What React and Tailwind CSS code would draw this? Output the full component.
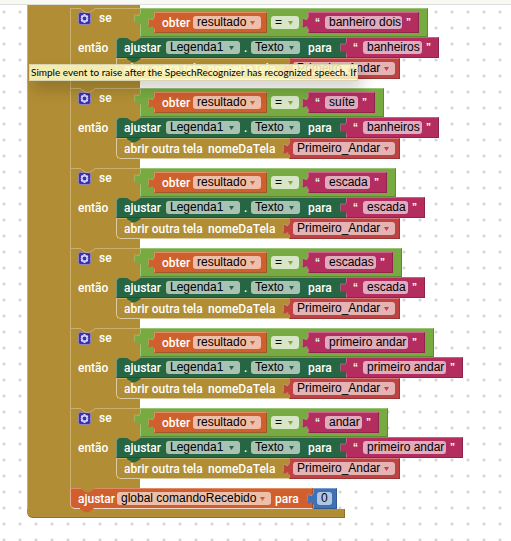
import React from "react";

const conditions = [
  { word: "banheiro dois", wordWidth: "w-[77px]", label: "banheiros", labelWidth: "w-[59px]" },
  { word: "suíte", wordWidth: "w-[33px]", label: "banheiros", labelWidth: "w-[59px]" },
  { word: "escada", wordWidth: "w-[45px]", label: "escada", labelWidth: "w-[45px]" },
  { word: "escadas", wordWidth: "w-[51px]", label: "escada", labelWidth: "w-[45px]" },
  { word: "primeiro andar", wordWidth: "w-[83px]", label: "primeiro andar", labelWidth: "w-[83px]" },
  { word: "andar", wordWidth: "w-[37px]", label: "primeiro andar", labelWidth: "w-[83px]" },
];

function Tab({ color, className = "-left-[7px] top-[4px]" }) {
  return (
    <svg className={`absolute ${className}`} width="7" height="12" viewBox="0 0 7 12" aria-hidden="true">
      <path d="M7 0.5H5.6C5.6 2.8 4.6 3 3 2.2C1.2 1.4 0.4 1 0.4 3.6V8.6C0.4 11 1.4 10.6 3 9.8C4.6 9 5.6 9 5.6 11.5H7Z" fill={color} />
      <path d="M5.6 0.5C5.6 2.8 4.6 3 3 2.2C1.2 1.4 0.4 1 0.4 3.6V8.6" fill="none" stroke="#fff" strokeOpacity="0.35" strokeWidth="0.7" />
    </svg>
  );
}

function Notch({ color, line }) {
  return (
    <svg className="absolute -top-px left-[10px]" width="14" height="5" viewBox="0 0 14 5" aria-hidden="true">
      <path d="M0 0V1L5 4.3H8.5L13.5 1V0Z" fill={color} />
      {line && <path d="M0 1.3L5 4.4H8.5L13.5 1.3" fill="none" stroke="#d0ba80" strokeWidth="0.8" />}
    </svg>
  );
}

function Dropdown({ name, value, width, arrow, tone = "bg-white/60" }) {
  return (
    <span className={`relative block h-[13px] shrink-0 rounded-[3px] ${tone} ${width}`}>
      <select aria-label={name} defaultValue={value} className="block h-[13px] w-full appearance-none bg-transparent pl-1 text-xs leading-[13px] text-black outline-none">
        <option>{value}</option>
      </select>
      <svg className="pointer-events-none absolute right-[6px] top-[5px]" width="5" height="4" viewBox="0 0 5 4" aria-hidden="true">
        <path d="M0 0H5L2.5 4Z" fill={arrow} />
      </svg>
    </span>
  );
}

function TextBlock({ value, width, name }) {
  return (
    <div className="relative flex h-[21px] shrink-0 items-center border border-t-[#c86089] border-l-[#c86089] border-r-[#8f244b] border-b-[#8f244b] bg-[#b32d5e] pl-[6px] pr-[5px]">
      <Tab color="#b32d5e" />
      <span className="w-[10px] text-[10px] font-bold leading-3 text-white">“</span>
      <input aria-label={name} defaultValue={value} className={`h-[13px] rounded-[3px] bg-white/60 pl-1 text-xs leading-[13px] text-black outline-none ${width}`} />
      <span className="w-[11px] pl-1 text-[10px] font-bold leading-3 text-white">”</span>
    </div>
  );
}

function Label({ children, className = "" }) {
  return <span className={`block shrink-0 whitespace-nowrap font-[Roboto] text-xs font-medium leading-3 text-white ${className}`}>{children}</span>;
}

function Mutator() {
  return (
    <button aria-label="Configurar bloco" className="block size-[13px] shrink-0">
      <svg width="13" height="13" viewBox="0 0 13 13" aria-hidden="true">
        <rect x="0.5" y="0.5" width="12" height="12" rx="2" fill="#3d30b5" stroke="#8f86b8" />
        <path d="M5.6 2.1h1.8l.3 1.3 1.3-.5 1.3 1.6-.8 1.1 1.1.9-1.1.9.8 1.1L9 10.1l-1.3-.5-.3 1.3H5.6l-.3-1.3-1.3.5-1.3-1.6.8-1.1-1.1-.9 1.1-.9-.8-1.1L4 2.9l1.3.5Z" fill="#dcd9ef" />
        <circle cx="6.5" cy="6.5" r="1.9" fill="#3d30b5" />
      </svg>
    </button>
  );
}

function IfBlock({ word, wordWidth, label, labelWidth }) {
  return (
    <section>
      <div className="flex h-[29px]">
        <div className="relative flex w-[70px] shrink-0 items-start border-l border-t border-[#c9b06e] bg-[#b18e35] pl-[7px] pt-[3px]">
          <Notch color="#b18e35" line />
          <Mutator />
          <Label className="ml-2">se</Label>
        </div>
        <div className="relative flex items-center border border-t-[#9cc376] border-l-[#9cc376] border-r-[#5f8934] border-b-[#5f8934] bg-[#77ab41] pl-[13px] pr-[8px]">
          <Tab color="#77ab41" />
          <div className="relative flex h-[21px] w-[113px] items-center border border-t-[#e08d68] border-l-[#e08d68] border-r-[#9c5a2a] border-b-[#9c5a2a] bg-[#d05f2d] pl-[7px]">
            <Tab color="#d05f2d" />
            <Label className="w-[31px]">obter</Label>
            <Dropdown name="Variável" value="resultado" width="w-[68px]" arrow="#d05f2d" />
          </div>
          <div className="ml-1 mr-[9px]">
            <Dropdown name="Operador" value="=" width="w-[28px]" arrow="#77ab41" tone="bg-white/70" />
          </div>
          <TextBlock value={word} width={wordWidth} name="Texto comparado" />
        </div>
      </div>
      <div className="flex">
        <div className="w-[46px] shrink-0 border-l border-[#c9b06e] bg-[#b18e35] pl-[7px] pt-[5px]">
          <Label>então</Label>
        </div>
        <div className="bg-[linear-gradient(90deg,#b18e35_24px,transparent_24px)]">
          <div className="flex h-[21px]">
            <div className="relative flex w-[230px] shrink-0 items-center rounded-tl-[5px] border-b border-l border-t border-b-[#1d5235] border-l-[#6f9a80] border-t-[#6f9a80] bg-[#266643] pl-[7px]">
              <Notch color="#b18e35" />
              <Label className="w-[42px]">ajustar</Label>
              <Dropdown name="Componente" value="Legenda1" width="w-[74px]" arrow="#266643" />
              <Label className="w-[11px] pl-1">.</Label>
              <Dropdown name="Propriedade" value="Texto" width="w-[49px]" arrow="#266643" />
              <Label className="pl-2">para</Label>
            </div>
            <TextBlock value={label} width={labelWidth} name="Texto da legenda" />
          </div>
          <div className="flex h-[21px]">
            <div className="relative flex w-[173px] shrink-0 items-center rounded-bl-[5px] border-b border-l border-t border-b-[#dccb9d] border-l-[#dccb9d] border-t-[#c9b06e] bg-[#b18e35] pl-[7px]">
              <Notch color="#266643" />
              <Label className="w-[84px]">abrir outra tela</Label>
              <Label>nomeDaTela</Label>
            </div>
            <div className="relative flex w-[111px] items-center border border-t-[#d47a7a] border-l-[#d47a7a] border-r-[#983535] border-b-[#983535] bg-[#bf4343] pl-[3px]">
              <Tab color="#bf4343" />
              <Dropdown name="Tela" value="Primeiro_Andar" width="w-[102px]" arrow="#bf4343" />
            </div>
          </div>
        </div>
      </div>
      <div className="h-[9px] w-[70px] border-l border-[#c9b06e] bg-[#b18e35]" />
    </section>
  );
}

export default function App() {
  return (
    <main className="min-h-screen overflow-hidden bg-white bg-[radial-gradient(circle,#d6d6d6_1px,transparent_2px)] bg-[size:16px_16px] bg-[position:-4px_4px] font-['Liberation_Sans',sans-serif]">
      <header className="h-[5px] border-b border-[#dedede] bg-[#f8f9f3]" />
      <div className="relative ml-[27px]">
        <div className="flex">
          <div className="w-[43px] shrink-0 border-l border-[#c9b06e] bg-[#b18e35]" />
          <div>
            <div className="h-[3px] w-[70px] bg-[#b18e35]" />
            {conditions.map((condition) => (
              <IfBlock key={condition.word} {...condition} />
            ))}
            <div className="flex h-[21px] bg-[linear-gradient(90deg,#b18e35_24px,transparent_24px)]">
              <div className="relative flex w-[243px] shrink-0 items-center rounded-bl-[5px] border border-b-[#f3d9cb] border-l-[#e9b08f] border-r-[#a64c24] border-t-[#df8d66] bg-[#d05f2d] pl-[7px]">
                <Notch color="#b18e35" />
                <Label className="w-[39px]">ajustar</Label>
                <Dropdown name="Variável global" value="global comandoRecebido" width="w-[154px]" arrow="#d05f2d" />
                <Label className="pl-1">para</Label>
              </div>
              <div className="relative flex w-[24px] items-center border border-b-[#325a91] border-l-[#7c9ecd] border-r-[#325a91] border-t-[#7c9ecd] bg-[#3f71b5] pl-[3px]">
                <Tab color="#3f71b5" />
                <input aria-label="Número" defaultValue="0" className="h-[13px] w-[15px] rounded-[3px] bg-white/60 pl-1 text-xs leading-[13px] text-black outline-none" />
              </div>
            </div>
          </div>
        </div>
        <div className="relative h-[9px] w-[318px] rounded-bl-[6px] border-b border-r border-[#8e722a] bg-[#b18e35]">
          <svg className="absolute -top-px left-[53px]" width="14" height="5" viewBox="0 0 14 5" aria-hidden="true">
            <path d="M0 0V1L5 4.3H8.5L13.5 1V0Z" fill="#d05f2d" />
          </svg>
        </div>
        <div role="tooltip" className="absolute left-[2px] top-[59px] h-[17px] w-[329px] whitespace-nowrap border border-[#d8d5b0] bg-[#fffcc4]/85 pl-px font-[Lato] text-[10px] leading-[15px] text-black shadow-[4px_8px_16px_rgba(0,0,0,0.2)]">
          Simple event to raise after the SpeechRecognizer has recognized speech. If
        </div>
      </div>
    </main>
  );
}
